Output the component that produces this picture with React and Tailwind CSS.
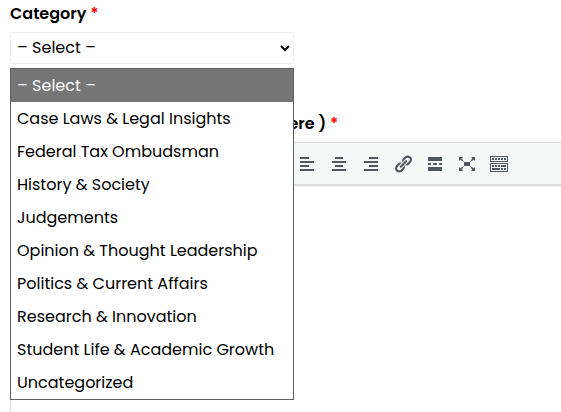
import { useState } from "react";
import clsx from "clsx";

const categories = [
  "– Select –",
  "Case Laws & Legal Insights",
  "Federal Tax Ombudsman",
  "History & Society",
  "Judgements",
  "Opinion & Thought Leadership",
  "Politics & Current Affairs",
  "Research & Innovation",
  "Student Life & Academic Growth",
  "Uncategorized",
];

const tools = [
  {
    label: "Bold",
    path: "M6 4v13h4.54c1.37 0 2.46-.33 3.26-1 .8-.66 1.2-1.58 1.2-2.77 0-.84-.17-1.51-.51-2.01s-.9-.85-1.67-1.03v-.09c.57-.1 1.02-.4 1.36-.9s.51-1.13.51-1.91c0-1.14-.39-1.98-1.17-2.5C12.75 4.26 11.5 4 9.78 4H6zm2.57 5.15V6.26h1.36c.73 0 1.27.11 1.61.32.34.22.51.58.51 1.07 0 .54-.16.92-.47 1.15s-.82.35-1.51.35h-1.5zm0 2.19h1.6c1.44 0 2.16.53 2.16 1.61 0 .6-.17 1.05-.51 1.34s-.86.43-1.57.43H8.57v-3.38z",
  },
  { label: "Italic", path: "M14.78 6h-2.13l-2.8 9h2.12l-.62 2H4.6l.62-2h2.14l2.8-9H8.03l.62-2h6.75z" },
  { label: "Bulleted list", path: "M3 3h2v2H3zm4 0h10v2H7zM3 9h2v2H3zm4 0h10v2H7zM3 15h2v2H3zm4 0h10v2H7z" },
  { label: "Numbered list", path: "M4 3h1v4H4zm3 1h10v2H7zM3 9h2v2H3zm4 0h10v2H7zM3 14h2v3H3zm4 0h10v2H7z" },
  { label: "Blockquote", path: "M3 5h5v6l-3 4H3l2-4H3zm8 0h5v6l-3 4h-2l2-4h-2z" },
  { label: "Align left", path: "M12 5V3H3v2h9zm5 4V7H3v2h14zm-5 4v-2H3v2h9zm5 4v-2H3v2h14z" },
  { label: "Align center", path: "M14 5V3H6v2h8zm3 4V7H3v2h14zm-3 4v-2H6v2h8zm3 4v-2H3v2h14z" },
  { label: "Align right", path: "M17 5V3H8v2h9zm0 4V7H3v2h14zm0 4v-2H8v2h9zm0 4v-2H3v2h14z" },
  {
    label: "Insert link",
    path: "M17.74 2.76c1.68 1.69 1.68 4.41 0 6.1l-1.53 1.52c-1.12 1.12-2.7 1.47-4.14 1.09l2.62-2.61.76-.77.76-.76c.84-.84.84-2.2 0-3.04-.84-.85-2.2-.85-3.04 0l-.77.76-3.38 3.38c-.37-1.44-.02-3.02 1.1-4.14l1.52-1.53c1.69-1.68 4.42-1.68 6.1 0zM8.59 13.43l5.34-5.34c.42-.42.42-1.1 0-1.52-.44-.43-1.13-.39-1.53 0l-5.33 5.34c-.42.42-.42 1.1 0 1.52.44.43 1.13.39 1.52 0zm-.76 2.29l4.14-4.15c.38 1.44.03 3.02-1.09 4.14l-1.52 1.53c-1.69 1.68-4.41 1.68-6.1 0-1.68-1.68-1.68-4.42 0-6.1l1.53-1.52c1.12-1.12 2.7-1.47 4.14-1.1l-4.14 4.15c-.85.84-.85 2.2 0 3.05.84.84 2.2.84 3.04 0z",
  },
  { label: "Read more", path: "M17 7V3H3v4h14zM6 11V9H3v2h3zm6 0V9H8v2h4zm5 0V9h-3v2h3zm0 6v-4H3v4h14z" },
  {
    label: "Fullscreen",
    path: "M7 8h6v4H7zm-5 5v4h4l-1.2-1.2L7 12l-3.8 2.2M14 17h4v-4l-1.2 1.2L13 12l2.2 3.8M14 3l1.3 1.3L13 8l3.8-2.2L18 7V3M6 3H2v4l1.2-1.2L7 8 4.7 4.3",
  },
  {
    label: "Toolbar toggle",
    path: "M19 2v6H1V2h18zm-1 5V3H2v4h16zM5 4v2H3V4h2zm3 0v2H6V4h2zm3 0v2H9V4h2zm3 0v2h-2V4h2zm3 0v2h-2V4h2zm2 5v9H1V9h18zm-1 8v-7H2v7h16zM5 11v2H3v-2h2zm3 0v2H6v-2h2zm3 0v2H9v-2h2zm6 0v2h-5v-2h5zm-6 3v2H3v-2h8zm3 0v2h-2v-2h2zm3 0v2h-2v-2h2z",
  },
];

const Required = () => <span className="text-[#ff0000]">*</span>;

const CategoryField = () => {
  const [open, setOpen] = useState(true);
  const [category, setCategory] = useState(categories[0]);

  return (
    <div className="flex flex-col gap-1.5">
      <label htmlFor="category" className="font-semibold">
        Category <Required />
      </label>
      <div className="relative w-[284px]">
        <select
          id="category"
          value={category}
          onChange={(e) => setCategory(e.target.value)}
          onMouseDown={(e) => {
            e.preventDefault();
            setOpen(!open);
          }}
          className="block w-full h-8 pl-0.5 pb-0.5 border border-[#eeeeee] rounded-[3px] bg-white outline-none"
        >
          {categories.map((name) => (
            <option key={name}>{name}</option>
          ))}
        </select>

        {/* Options */}
        {open && (
          <ul
            role="listbox"
            aria-label="Category"
            className="absolute left-0 top-full mt-1 z-10 w-full border border-[#5f5f5f] bg-white"
          >
            {categories.map((name) => (
              <li
                key={name}
                role="option"
                aria-selected={name === category}
                onClick={() => {
                  setCategory(name);
                  setOpen(false);
                }}
                className={clsx(
                  "h-[33px] px-1.5 leading-[34px] whitespace-nowrap cursor-default",
                  name === category && "bg-[#767676] text-white"
                )}
              >
                {name}
              </li>
            ))}
          </ul>
        )}
      </div>
    </div>
  );
};

const Editor = () => (
  <div className="flex-1 flex flex-col gap-1.5">
    <label htmlFor="content" className="font-semibold">
      Post Content: ( Write your article here ) <Required />
    </label>
    <div className="flex-1 flex flex-col border-l border-t border-[#dcdcde]">
      {/* Toolbar */}
      <div className="flex items-center h-[43px] bg-[#f6f7f7] border-b-2 border-[#dcdcde] shadow-[0_1px_0_#f3f3f3] overflow-hidden">
        <select aria-label="Format" className="shrink-0 w-[120px] h-7 text-sm bg-white border border-[#dcdcde]">
          <option>Paragraph</option>
        </select>
        {tools.map((tool) => (
          <button
            key={tool.label}
            type="button"
            aria-label={tool.label}
            className="shrink-0 w-8 h-8 flex items-center justify-center text-[#50575e] hover:text-black"
          >
            <svg viewBox="0 0 20 20" className="w-5 h-5" fill="currentColor">
              <path d={tool.path} />
            </svg>
          </button>
        ))}
      </div>
      <textarea id="content" className="flex-1 w-full p-2 bg-transparent resize-none outline-none" />
    </div>
  </div>
);

const App = () => {
  return (
    <form className="min-h-screen flex flex-col gap-12 pl-2.5 pt-0.5 bg-white text-black text-base font-['Poppins','Inter',sans-serif]">
      <CategoryField />
      <Editor />
    </form>
  );
};

export default App;
